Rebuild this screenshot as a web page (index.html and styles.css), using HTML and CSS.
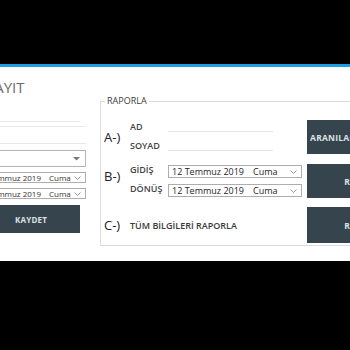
FILE: index.html
```html
<!DOCTYPE html>
<html lang="tr">
<head>
    <meta charset="UTF-8">
    <meta name="viewport" content="width=device-width, initial-scale=1.0">
    <title>Kayıt / Raporla</title>
    <link rel="stylesheet" href="styles.css">
</head>
<body>
    <div class="topbar"></div>

    <div class="window">
        <section class="kayit">
            <h2>KAYIT</h2>
            <div class="txt-a"></div>
            <div class="txt-b"></div>
            <div class="combo">
                <svg class="arrow" width="7" height="4" viewBox="0 0 7 4"><path d="M0 0h7L3.5 3.5z" fill="#777"/></svg>
            </div>
            <div class="picker small">
                <span>12 Temmuz 2019</span><span class="day">Cuma</span>
                <svg class="chev" width="7" height="4" viewBox="0 0 7 4"><path d="M0.5 0.5L3.5 3.5L6.5 0.5" fill="none" stroke="#999"/></svg>
            </div>
            <div class="picker small">
                <span>12 Temmuz 2019</span><span class="day">Cuma</span>
                <svg class="chev" width="7" height="4" viewBox="0 0 7 4"><path d="M0.5 0.5L3.5 3.5L6.5 0.5" fill="none" stroke="#999"/></svg>
            </div>
            <button class="btn kaydet">KAYDET</button>
        </section>

        <fieldset class="rapor">
            <legend>RAPORLA</legend>

            <div class="row row1">
                <div class="letter">A-)</div>
                <div class="fields">
                    <div class="field">
                        <label>AD</label>
                        <div class="line"></div>
                    </div>
                    <div class="field">
                        <label>SOYAD</label>
                        <div class="line"></div>
                    </div>
                </div>
                <button class="btn">ARANILANLARI RAPORLA</button>
            </div>

            <div class="row row2">
                <div class="letter">B-)</div>
                <div class="fields">
                    <div class="field">
                        <label>GİDİŞ</label>
                        <div class="picker">
                            <span>12 Temmuz 2019</span><span class="day">Cuma</span>
                            <svg class="chev" width="7" height="4" viewBox="0 0 7 4"><path d="M0.5 0.5L3.5 3.5L6.5 0.5" fill="none" stroke="#999"/></svg>
                        </div>
                    </div>
                    <div class="field">
                        <label>DÖNÜŞ</label>
                        <div class="picker">
                            <span>12 Temmuz 2019</span><span class="day">Cuma</span>
                            <svg class="chev" width="7" height="4" viewBox="0 0 7 4"><path d="M0.5 0.5L3.5 3.5L6.5 0.5" fill="none" stroke="#999"/></svg>
                        </div>
                    </div>
                </div>
                <button class="btn">RAPORLA</button>
            </div>

            <div class="row row3">
                <div class="letter">C-)</div>
                <div class="fields">
                    <label>TÜM BİLGİLERİ RAPORLA</label>
                </div>
                <button class="btn">RAPORLA</button>
            </div>
        </fieldset>
    </div>
</body>
</html>
```

FILE: styles.css
```css
body {
    margin: 0;
    width: 350px;
    height: 350px;
    overflow: hidden;
    background-color: #000;
    font-family: "Open Sans", "Noto Sans", sans-serif;
}

.topbar {
    height: 64px;
}

.window {
    display: flex;
    height: 194px;
    overflow: hidden;
    background-color: #fff;
    border-top: 3px solid #1ba1e2;
}

/* left panel, cut off by the window edge */
.kayit {
    flex: none;
    width: 131px;
    margin-left: -45px;
    padding-top: 11px;
}

.kayit h2 {
    margin: 0 0 0 30px;
    font-size: 15px;
    line-height: 18px;
    font-weight: 400;
    color: #6b6b6b;
}

.txt-a {
    width: 125px;
    height: 25px;
    border-bottom: 1px solid #e8e8e8;
}

.txt-b {
    height: 16px;
    margin-top: 4px;
    border-top: 1px solid #e8e8e8;
    border-bottom: 1px solid #e8e8e8;
}

.combo {
    display: flex;
    align-items: center;
    height: 17px;
    margin-top: 6px;
    border: 1px solid #b4b4b4;
    box-sizing: border-box;
}

.arrow {
    margin-left: auto;
    margin-right: 5px;
}

.picker {
    display: flex;
    align-items: center;
    width: 134px;
    height: 13px;
    padding: 0 3px;
    border: 1px solid #adadad;
    box-sizing: border-box;
    font-size: 9px;
    color: #1e1e1e;
    white-space: nowrap;
}

.picker .day {
    margin-left: 9px;
}

.picker .chev {
    margin-left: auto;
    margin-right: 1px;
}

.picker.small {
    width: auto;
    height: 11px;
    margin-top: 5px;
    padding-left: 21px;
    font-size: 8px;
    color: #333;
}

.picker.small .day {
    margin-left: 8px;
}

.btn {
    flex: none;
    width: 116px;
    margin-left: 5px;
    padding: 0;
    border: none;
    background-color: #36454d;
    color: #dce1e4;
    font-family: inherit;
    font-size: 8.5px;
    font-weight: 700;
    letter-spacing: 0.2px;
    white-space: nowrap;
}

.kaydet {
    display: block;
    width: 98px;
    height: 28px;
    margin: 6px 0 0 27px;
    font-size: 8px;
}

/* RAPORLA group */
.rapor {
    flex: none;
    align-self: flex-start;
    width: 320px;
    min-width: 0;
    margin: 29px 0 0 14px;
    padding: 14px 0 2px 3px;
    border: 1px solid #dcdcdc;
}

.rapor legend {
    margin-left: 1px;
    padding: 0 2px;
    font-size: 9px;
    line-height: 10px;
    color: #3c3c3c;
}

.row {
    display: flex;
}

.row1 {
    height: 34px;
}

.row2 {
    height: 34px;
    margin-top: 10px;
}

.row3 {
    height: 36px;
    margin-top: 9px;
}

.letter {
    width: 26px;
    align-self: center;
    font-size: 13px;
    line-height: 16px;
    color: #222;
}

.row2 .letter {
    align-self: flex-start;
    margin-top: 4px;
}

.fields {
    width: 172px;
    padding-top: 1px;
}

.field {
    display: flex;
    align-items: flex-start;
}

label {
    width: 38px;
    flex: none;
    font-size: 9px;
    line-height: 11px;
    font-weight: 600;
    color: #444;
}

.row1 .field {
    height: 19px;
}

.line {
    width: 105px;
    height: 10px;
    border-bottom: 1px solid #e4e4e4;
}

.row2 .field + .field {
    margin-top: 6px;
}

.row2 label {
    margin-top: -1px;
}

.row3 .fields {
    display: flex;
    align-items: center;
    padding-top: 0;
}

.row3 label {
    width: auto;
    color: #3a3a3a;
}
```
